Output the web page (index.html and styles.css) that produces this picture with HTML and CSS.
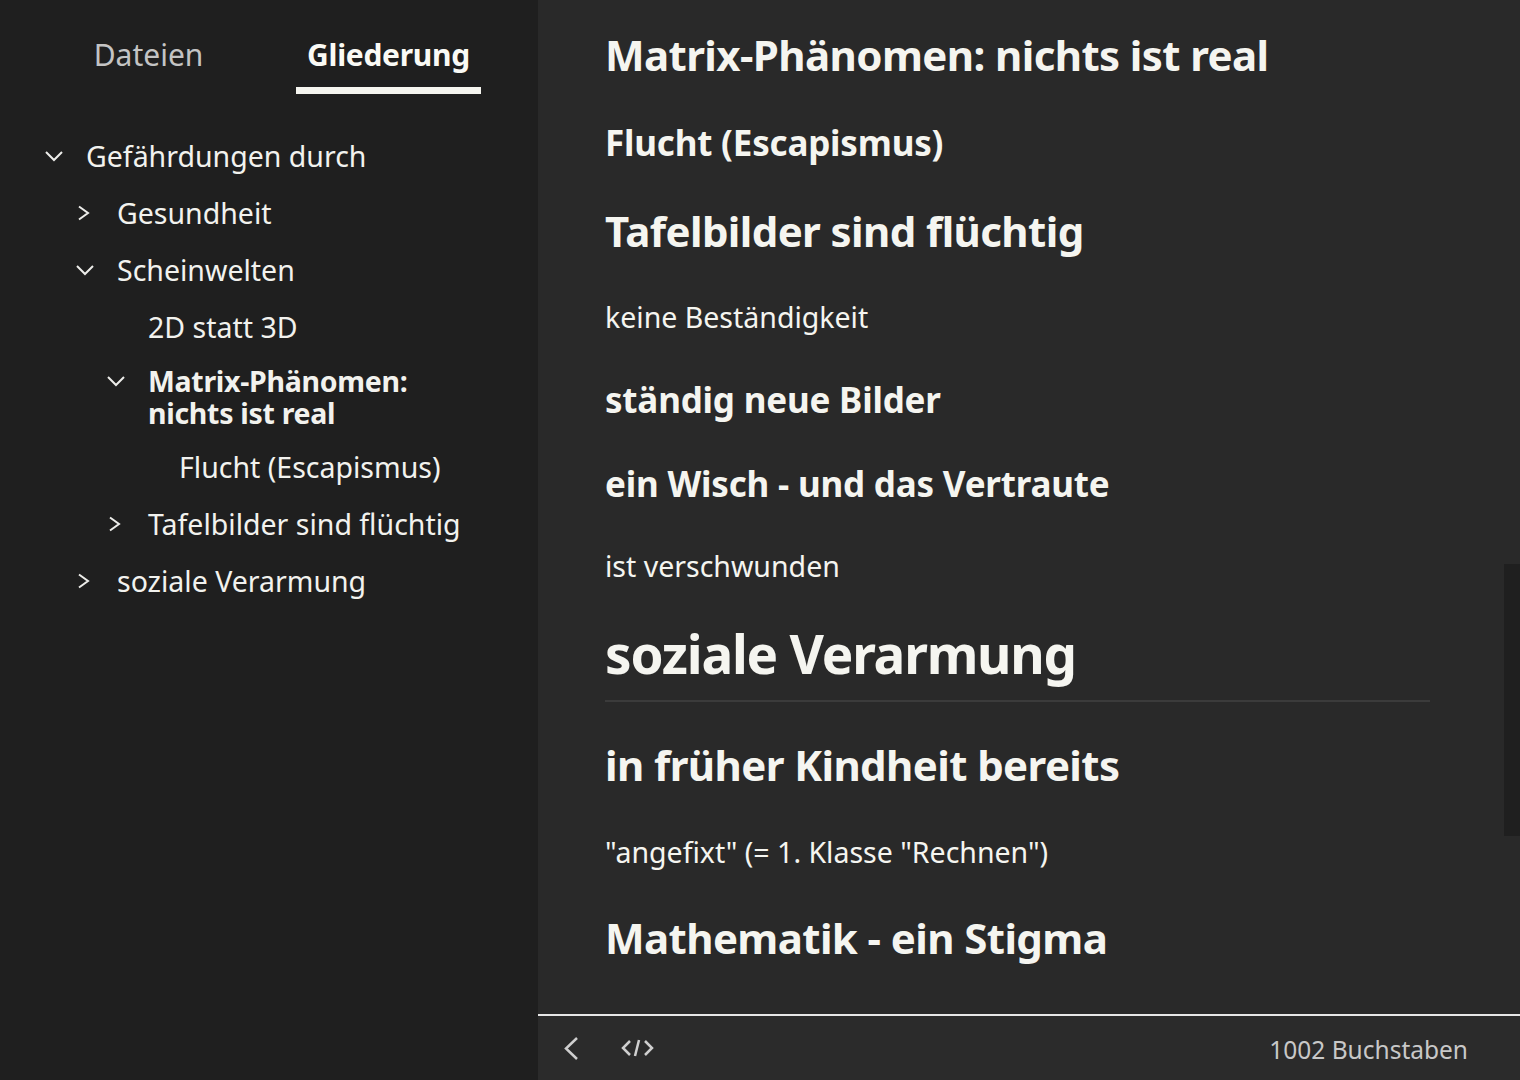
FILE: index.html
```html
<!DOCTYPE html>
<html>
    <head>
        <title>Gliederung</title>
        <meta charset="UTF-8">
        <link rel="stylesheet" href="styles.css">
    </head>
    <body>
        <div class="app">
            <aside class="sidebar">
                <div class="tabs">
                    <div class="tab">Dateien</div>
                    <div class="tab active">Gliederung</div>
                </div>
                <ul class="outline">
                    <li class="node lvl0">
                        <span class="twisty"><svg width="24" height="24" viewBox="0 0 24 24"><path d="M4 8 L12 16 L20 8"/></svg></span>
                        <span class="label">Gefährdungen durch</span>
                    </li>
                    <li class="node lvl1">
                        <span class="twisty"><svg width="24" height="24" viewBox="0 0 24 24"><path d="M6 5.5 L15 12 L6 18.5"/></svg></span>
                        <span class="label">Gesundheit</span>
                    </li>
                    <li class="node lvl1">
                        <span class="twisty"><svg width="24" height="24" viewBox="0 0 24 24"><path d="M4 8 L12 16 L20 8"/></svg></span>
                        <span class="label">Scheinwelten</span>
                    </li>
                    <li class="node lvl2">
                        <span class="twisty"></span>
                        <span class="label">2D statt 3D</span>
                    </li>
                    <li class="node lvl2 current">
                        <span class="twisty"><svg width="24" height="24" viewBox="0 0 24 24"><path d="M4 8 L12 16 L20 8"/></svg></span>
                        <span class="label">Matrix-Phänomen: nichts ist real</span>
                    </li>
                    <li class="node lvl3">
                        <span class="twisty"></span>
                        <span class="label">Flucht (Escapismus)</span>
                    </li>
                    <li class="node lvl2">
                        <span class="twisty"><svg width="24" height="24" viewBox="0 0 24 24"><path d="M6 5.5 L15 12 L6 18.5"/></svg></span>
                        <span class="label">Tafelbilder sind flüchtig</span>
                    </li>
                    <li class="node lvl1">
                        <span class="twisty"><svg width="24" height="24" viewBox="0 0 24 24"><path d="M6 5.5 L15 12 L6 18.5"/></svg></span>
                        <span class="label">soziale Verarmung</span>
                    </li>
                </ul>
            </aside>

            <main class="editor">
                <div class="doc">
                    <h2>Matrix-Phänomen: nichts ist real</h2>
                    <h3>Flucht (Escapismus)</h3>
                    <h2>Tafelbilder sind flüchtig</h2>
                    <p>keine Beständigkeit</p>
                    <h3>ständig neue Bilder</h3>
                    <h3>ein Wisch - und das Vertraute</h3>
                    <p>ist verschwunden</p>
                    <h1>soziale Verarmung</h1>
                    <h2>in früher Kindheit bereits</h2>
                    <p>"angefixt" (= 1. Klasse "Rechnen")</p>
                    <h2>Mathematik - ein Stigma</h2>
                </div>
                <div class="scroll-thumb"></div>
                <footer class="statusbar">
                    <svg class="back" width="16" height="24" viewBox="0 0 16 24"><path d="M14 2 L3 12.5 L14 23"/></svg>
                    <svg class="source" width="34" height="20" viewBox="0 0 34 20"><path d="M10 3 L3 10 L10 17 M19 2 L15 18 M25 3 L32 10 L25 17"/></svg>
                    <span class="count">1002 Buchstaben</span>
                </footer>
            </main>
        </div>
    </body>
</html>
```

FILE: styles.css
```css
html, body {
    margin: 0;
    height: 100%;
    background-color: #1f1f1f;
}
body {
    font-family: "Noto Sans", "Open Sans", sans-serif;
    color: #f5f5f0;
    overflow: hidden;
}
.app {
    display: grid;
    grid-template-columns: 538px 1fr;
    height: 1080px;
}

/* sidebar */
.sidebar {
    background-color: #1f1f1f;
}
.tabs {
    display: flex;
    gap: 55px;
    padding: 35px 0 0 56px;
}
.tab {
    width: 185px;
    text-align: center;
    font-size: 30px;
    line-height: 40px;
    color: #c4c4c4;
    padding-bottom: 12px;
    border-bottom: 7px solid transparent;
}
.tab.active {
    color: #fafaf5;
    font-weight: bold;
    letter-spacing: -0.3px;
    border-bottom-color: #f5f5ef;
}
.outline {
    list-style: none;
    margin: 33px 0 0;
    padding: 0 62px 0 0;
}
.node {
    display: flex;
    align-items: flex-start;
    padding-top: 11.65px;
    padding-bottom: 11.65px;
    font-size: 28.5px;
    line-height: 34px;
    color: #f2f2ee;
}
.node.current {
    font-weight: bold;
    line-height: 32px;
    letter-spacing: -0.3px;
    padding-top: 9px;
    padding-bottom: 9px;
}
.lvl0 { padding-left: 40px; }
.lvl1 { padding-left: 71px; }
.lvl2 { padding-left: 102px; }
.lvl3 { padding-left: 133px; }
.twisty {
    flex: 0 0 46px;
    height: 34px;
    display: flex;
    align-items: center;
}
.node.current .twisty {
    height: 32px;
}
.twisty svg {
    margin-left: 2px;
}
.twisty path {
    fill: none;
    stroke: #ededea;
    stroke-width: 2;
}

/* editor */
.editor {
    position: relative;
    background-color: #292929;
    display: flex;
    flex-direction: column;
    min-width: 0;
}
.doc {
    flex: 1;
    overflow: hidden;
    padding: 29.5px 90px 0 67px;
}
.doc h1, .doc h2, .doc h3, .doc p {
    margin: 0;
    line-height: 1.2;
}
.doc h1 {
    font-size: 53px;
    letter-spacing: -1.2px;
    margin-top: 38px;
    padding-bottom: 15px;
    border-bottom: 2px solid #3b3b3b;
}
.doc h2 {
    font-size: 42px;
    letter-spacing: -0.6px;
    margin-top: 42px;
}
.doc h2:first-child {
    margin-top: 0;
}
.doc h3 {
    font-size: 35px;
    letter-spacing: -0.2px;
    margin-top: 42px;
}
.doc p {
    font-size: 28.5px;
    margin-top: 44px;
}
.doc h1 + h2 {
    margin-top: 38px;
}
.doc p + h3 {
    margin-top: 45px;
}
.doc p + h2 {
    margin-top: 44px;
}
.scroll-thumb {
    position: absolute;
    right: 0;
    top: 564px;
    width: 16px;
    height: 272px;
    background-color: #1f1f1f;
}
.statusbar {
    height: 64px;
    border-top: 2px solid #e6e6e6;
    background-color: #2b2b2b;
    display: flex;
    align-items: center;
    padding: 0 52px 0 25px;
}
.statusbar path {
    fill: none;
    stroke: #cfcfcf;
    stroke-width: 2.5;
}
.statusbar .source {
    margin-left: 41px;
}
.count {
    margin-left: auto;
    font-size: 24.5px;
    color: #c8c8c8;
    padding-top: 3px;
}
```
